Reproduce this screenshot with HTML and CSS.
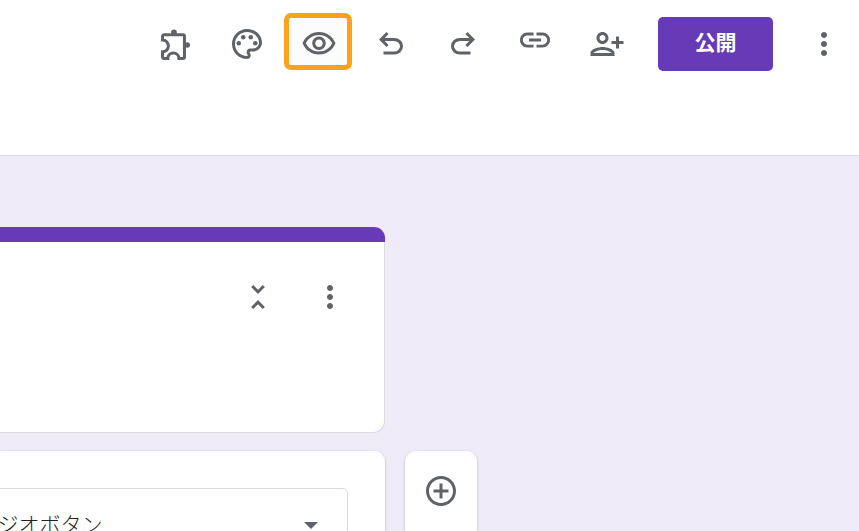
FILE: index.html
```html
<!DOCTYPE html>
<html lang="ja">
<head>
    <meta charset="UTF-8">
    <meta name="viewport" content="width=device-width, initial-scale=1.0">
    <title>フォーム</title>
    <link rel="stylesheet" href="styles.css">
</head>
<body>
    <header class="top-bar">
        <div class="tools">
            <button class="icon-btn" aria-label="アドオン">
                <svg viewBox="0 0 24 24"><path class="line" d="M4.7 5.9H17.3a1 1 0 0 1 1 1V20.7a1 1 0 0 1-1 1H14.6A3.7 3.7 0 0 0 7.2 21.7H4.7a1 1 0 0 1-1-1V17.2A3.9 3.9 0 0 0 3.7 9.4V6.9a1 1 0 0 1 1-1Z"/><circle cx="11.3" cy="4.2" r="1.9"/><circle cx="20.2" cy="12.7" r="1.8"/></svg>
            </button>
            <button class="icon-btn" aria-label="テーマ">
                <svg viewBox="0 0 24 24"><path d="M12 22C6.49 22 2 17.51 2 12S6.49 2 12 2s10 4.04 10 9c0 3.31-2.69 6-6 6h-1.77c-.28 0-.5.22-.5.5 0 .12.05.23.13.33.41.47.64 1.06.64 1.67 0 1.38-1.12 2.5-2.5 2.5zm0-18c-4.41 0-8 3.59-8 8s3.59 8 8 8c.28 0 .5-.22.5-.5 0-.16-.08-.28-.14-.35-.41-.46-.63-1.05-.63-1.65 0-1.38 1.12-2.5 2.5-2.5H16c2.21 0 4-1.79 4-4 0-3.86-3.59-7-8-7z"/><circle cx="6.5" cy="11.5" r="1.5"/><circle cx="9.5" cy="7.5" r="1.5"/><circle cx="14.5" cy="7.5" r="1.5"/><circle cx="17.5" cy="11.5" r="1.5"/></svg>
            </button>
            <button class="icon-btn icon-btn-focus" aria-label="プレビュー">
                <svg viewBox="0 0 24 24"><path d="M12 6c3.79 0 7.17 2.13 8.82 5.5C19.17 14.87 15.79 17 12 17s-7.17-2.13-8.82-5.5C4.83 8.13 8.21 6 12 6m0-2C7 4 2.73 7.11 1 11.5 2.73 15.89 7 19 12 19s9.27-3.11 11-7.5C21.27 7.11 17 4 12 4zm0 5c1.38 0 2.5 1.12 2.5 2.5S13.38 14 12 14s-2.5-1.12-2.5-2.5S10.62 9 12 9m0-2c-2.48 0-4.5 2.02-4.5 4.5S9.52 16 12 16s4.5-2.02 4.5-4.5S14.48 7 12 7z"/></svg>
            </button>
            <button class="icon-btn" aria-label="元に戻す">
                <svg viewBox="0 0 24 24"><path d="M7 19v-2h7.1q1.575 0 2.738-1T18 13.5q0-1.5-1.163-2.5T14.1 10H7.8l2.6 2.6L9 14 4 9l5-5 1.4 1.4L7.8 8h6.3q2.425 0 4.163 1.575T20 13.5q0 2.35-1.737 3.925T14.1 19Z"/></svg>
            </button>
            <button class="icon-btn" aria-label="やり直す">
                <svg viewBox="0 0 24 24"><path transform="matrix(-1 0 0 1 24 0)" d="M7 19v-2h7.1q1.575 0 2.738-1T18 13.5q0-1.5-1.163-2.5T14.1 10H7.8l2.6 2.6L9 14 4 9l5-5 1.4 1.4L7.8 8h6.3q2.425 0 4.163 1.575T20 13.5q0 2.35-1.737 3.925T14.1 19Z"/></svg>
            </button>
            <button class="icon-btn" aria-label="リンクをコピー">
                <svg viewBox="0 2.6 24 24"><path d="M3.9 12c0-1.71 1.39-3.1 3.1-3.1h4V7H7c-2.76 0-5 2.24-5 5s2.24 5 5 5h4v-1.9H7c-1.71 0-3.1-1.39-3.1-3.1zM8 13h8v-2H8v2zm9-6h-4v1.9h4c1.71 0 3.1 1.39 3.1 3.1s-1.39 3.1-3.1 3.1h-4V17h4c2.76 0 5-2.24 5-5s-2.24-5-5-5z"/></svg>
            </button>
            <button class="icon-btn" aria-label="共同編集者を追加">
                <svg viewBox="0 0 24 24"><path transform="matrix(-1 0 0 1 24 0)" d="M15 12c2.21 0 4-1.79 4-4s-1.79-4-4-4-4 1.79-4 4 1.79 4 4 4zm0-6c1.1 0 2 .9 2 2s-.9 2-2 2-2-.9-2-2 .9-2 2-2zm0 8c-2.67 0-8 1.34-8 4v2h16v-2c0-2.66-5.33-4-8-4zm-6 4c.22-.63 2.77-2 6-2 3.25 0 5.8 1.38 6 2H9zm-3-3v-3h3v-2H6V7H4v3H1v2h3v3h2z"/></svg>
            </button>
            <button class="publish-btn">公開</button>
            <button class="icon-btn" aria-label="その他">
                <svg viewBox="0 0 24 24"><path d="M12 8c1.1 0 2-.9 2-2s-.9-2-2-2-2 .9-2 2 .9 2 2 2zm0 2c-1.1 0-2 .9-2 2s.9 2 2 2 2-.9 2-2-.9-2-2-2zm0 6c-1.1 0-2 .9-2 2s.9 2 2 2 2-.9 2-2-.9-2-2-2z"/></svg>
            </button>
        </div>
    </header>

    <main class="editor">
        <div class="card-column">
            <section class="card title-card">
                <div class="card-accent"></div>
                <div class="card-actions">
                    <button class="icon-btn" aria-label="折りたたむ">
                        <svg viewBox="0 0 24 24"><path d="M7.41 18.59L8.83 20 12 16.83 15.17 20l1.41-1.41L12 14l-4.59 4.59zm9.18-13.18L15.17 4 12 7.17 8.83 4 7.41 5.41 12 10l4.59-4.59z"/></svg>
                    </button>
                    <button class="icon-btn" aria-label="その他">
                        <svg viewBox="0 0 24 24"><path d="M12 8c1.1 0 2-.9 2-2s-.9-2-2-2-2 .9-2 2 .9 2 2 2zm0 2c-1.1 0-2 .9-2 2s.9 2 2 2 2-.9 2-2-.9-2-2-2zm0 6c-1.1 0-2 .9-2 2s.9 2 2 2 2-.9 2-2-.9-2-2-2z"/></svg>
                    </button>
                </div>
            </section>
            <section class="card question-card">
                <div class="type-select">
                    <span class="type-label">ラジオボタン</span>
                    <span class="caret"></span>
                </div>
            </section>
        </div>
        <aside class="side-toolbar">
            <button class="icon-btn" aria-label="質問を追加">
                <svg viewBox="0 0 24 24"><path d="M13 7h-2v4H7v2h4v4h2v-4h4v-2h-4V7zm-1-5C6.48 2 2 6.48 2 12s4.48 10 10 10 10-4.48 10-10S17.52 2 12 2zm0 18c-4.41 0-8-3.59-8-8s3.59-8 8-8 8 3.59 8 8-3.59 8-8 8z"/></svg>
            </button>
        </aside>
    </main>
</body>
</html>
```

FILE: styles.css
```css
html, body {
    height: 100%;
}
body {
    font-family: "Roboto", "Noto Sans CJK JP", sans-serif;
    background: #f0ebf8;
    margin: 0;
    overflow: hidden;
}
button {
    font-family: inherit;
    border: none;
    background: none;
    padding: 0;
}
.top-bar {
    background: #fff;
    height: 156px;
    border-bottom: 1px solid #dadce0;
    box-sizing: border-box;
}
.tools {
    display: flex;
    justify-content: flex-end;
    align-items: flex-start;
    gap: 36px;
    padding: 26px 17px 0 0;
}
.icon-btn {
    display: block;
    position: relative;
    width: 36px;
    height: 36px;
    flex: none;
}
.icon-btn svg {
    display: block;
    width: 36px;
    height: 36px;
    fill: #5f6368;
}
.icon-btn svg .line {
    fill: none;
    stroke: #5f6368;
    stroke-width: 2;
}
.icon-btn-focus::before {
    content: "";
    position: absolute;
    left: -17px;
    top: -13px;
    width: 68px;
    height: 57px;
    box-sizing: border-box;
    border: 5px solid #ffa21a;
    border-radius: 7px;
    background: #fcfcfc;
}
.icon-btn-focus svg {
    position: relative;
}
.publish-btn {
    width: 115px;
    height: 54px;
    margin: -9px -3px 0 -3px;
    padding-bottom: 6px;
    background: #673ab7;
    color: #fff;
    font-size: 21px;
    font-weight: 700;
    border-radius: 5px;
}
.editor {
    display: flex;
    align-items: flex-start;
    gap: 20px;
    padding-top: 71px;
}
.card-column {
    width: 385px;
    display: flex;
    flex-direction: column;
    gap: 18px;
}
.card {
    background: #fff;
    border-radius: 0 11px 11px 0;
    box-sizing: border-box;
}
.title-card {
    height: 206px;
    overflow: hidden;
    box-shadow: inset -1px -1px 0 #dadce0;
}
.card-accent {
    height: 15px;
    background: #673ab7;
}
.card-actions {
    display: flex;
    justify-content: flex-end;
    gap: 36px;
    padding: 37px 37px 0 0;
}
.question-card {
    height: 150px;
    padding: 37px 37px 0 0;
    box-shadow: 0 1px 3px rgba(60, 64, 67, 0.3);
}
.type-select {
    height: 70px;
    margin-left: -30px;
    box-sizing: border-box;
    border: 1px solid #dadce0;
    border-radius: 5px;
    display: flex;
    align-items: center;
    justify-content: space-between;
    padding: 0 29px 0 6px;
}
.type-label {
    font-size: 21px;
    font-weight: 300;
    color: #202124;
}
.caret {
    width: 0;
    height: 0;
    border-left: 7px solid transparent;
    border-right: 7px solid transparent;
    border-top: 7px solid #5f6368;
    margin-top: 4px;
}
.side-toolbar {
    width: 72px;
    height: 150px;
    margin-top: 224px;
    background: #fff;
    border-radius: 11px;
    box-shadow: 0 1px 3px rgba(60, 64, 67, 0.3);
    display: flex;
    justify-content: center;
    padding-top: 22px;
    box-sizing: border-box;
}
```
